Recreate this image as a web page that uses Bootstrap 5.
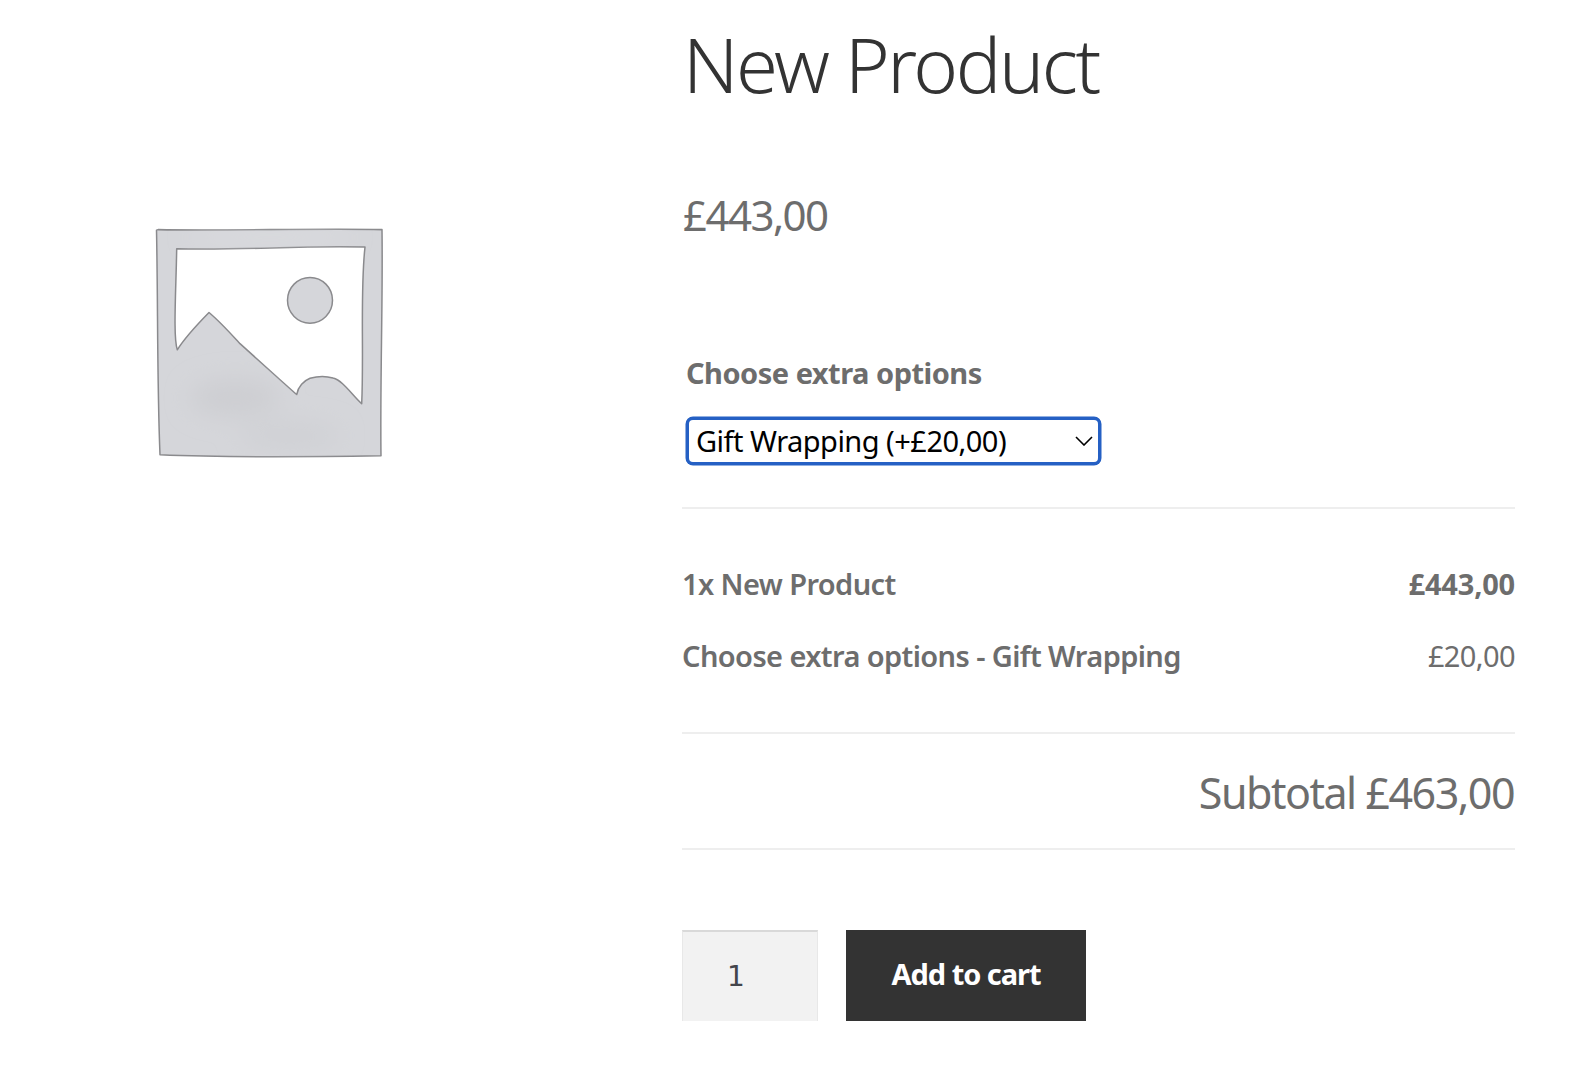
<!DOCTYPE html>
<html lang="en">
<head>
<meta charset="utf-8">
<title>New Product</title>
<link rel="stylesheet" href="https://cdn.jsdelivr.net/npm/bootstrap@5.3.0/dist/css/bootstrap.min.css">
<style>
html,body{background:#fff;height:1082px;overflow:hidden}
body{font-family:"Noto Sans","Liberation Sans",sans-serif;color:#6d6d6d}
.shop-page{width:1515px}
.gallery-col{width:682px;flex:none;padding:222px 0 0 150px}
.summary-col{flex:1 1 auto;min-width:0}
.prod-title{font-weight:300;font-size:76px;line-height:100px;letter-spacing:-2.4px;color:#333;margin:14px 0 0 1px}
.prod-price{font-size:42px;line-height:50px;letter-spacing:-1.55px;margin:76px 0 0 1px}
.opt-wrap{padding:0 0 0 4px;margin-top:113px}
.opt-label{font-weight:700;font-size:29px;line-height:40px;letter-spacing:-.5px;margin-bottom:24px}
.opt-select.form-select{width:415px;height:48px;padding:0 0 0 7px;border:3px solid #2560c4;border-radius:7px;font-size:29px;line-height:42px;letter-spacing:-.52px;color:#000;background-image:url("data:image/svg+xml,%3csvg xmlns='http://www.w3.org/2000/svg' viewBox='0 0 18 10'%3e%3cpath fill='none' stroke='%23000' stroke-width='1.6' d='M1 1l8 8 8-8'/%3e%3c/svg%3e");background-size:18px 10px;background-position:right 5px center;box-shadow:0 0 0 .5px #2560c4}
.rule{height:2px;background:#eee}
.rule-a{margin-top:42px}
.line-rows{padding-top:55px;padding-bottom:56px;font-size:29px;line-height:40px;letter-spacing:-.6px}
.line-rows .line-gap{margin-top:32px}
.strong-txt{font-weight:700;letter-spacing:-.2px}
.medium-txt{font-weight:600}
.sub-total{font-size:43px;line-height:56px;letter-spacing:-1.5px;text-align:right;padding:31px 1px 27px 0}
.cart-form{margin-top:80px;gap:28px}
.qty-box{width:136px;height:91px;background:#f2f2f2;border:0;border-top:2px solid #d9d9d9;border-left:1px solid #e8e8e8;border-right:1px solid #e8e8e8;border-radius:0;font-family:"DejaVu Sans",sans-serif;font-size:28px;color:#43454b;padding:0 0 0 44px;outline:0}
.cart-btn.btn{width:240px;height:91px;padding:0 0 3px;background:#333;color:#fff;border:0;border-radius:0;font-weight:700;font-size:29px;letter-spacing:-1.05px}
</style>
</head>
<body>
<main class="shop-page d-flex">
  <div class="gallery-col">
    <svg class="d-block" width="240" height="244" viewBox="150 222 240 240" preserveAspectRatio="none" role="img" aria-label="Placeholder image">
      <defs>
        <filter id="soft" x="-50%" y="-50%" width="200%" height="200%"><feGaussianBlur stdDeviation="12"/></filter>
        <filter id="edge"><feGaussianBlur stdDeviation=".45"/></filter>
        <clipPath id="shape"><path clip-rule="evenodd" d="M158 229.500C220 231 320 228 382 229.500C383 300 380 380 381 452C310 453 230 454 160 451C157 380 158 300 156.500 230ZM176.700 248.300C240 250 300 245 365 246.700C360 290 364 350 361.700 400.700C352 392 343 378 333 375.500C325 373 316 374 310 375.700C304 378 298 384 296.700 391.700C290 386 281 378 272 370L240 341.700C230 331 220 320 209 311C198 322 186 334 177.300 347.700C173 335 176 290 176.700 248.300Z"/></clipPath>
      </defs>
      <g filter="url(#edge)">
        <path fill="#d5d6da" stroke="#8a8a8d" stroke-width="1.5" fill-rule="evenodd" stroke-linejoin="round" d="M158 229.500C220 231 320 228 382 229.500C383 300 380 380 381 452C310 453 230 454 160 451C157 380 158 300 156.500 230ZM176.700 248.300C240 250 300 245 365 246.700C360 290 364 350 361.700 400.700C352 392 343 378 333 375.500C325 373 316 374 310 375.700C304 378 298 384 296.700 391.700C290 386 281 378 272 370L240 341.700C230 331 220 320 209 311C198 322 186 334 177.300 347.700C173 335 176 290 176.700 248.300Z"/>
        <circle cx="310" cy="299" r="22.500" fill="#d5d6da" stroke="#8a8a8d" stroke-width="1.500"/>
      </g>
      <g clip-path="url(#shape)">
        <g filter="url(#soft)">
          <ellipse cx="235" cy="395" rx="45" ry="18" fill="#cdced2"/>
          <ellipse cx="290" cy="432" rx="50" ry="12" fill="#cfd0d4"/>
          <ellipse cx="270" cy="237" rx="80" ry="6" fill="#dcdde0"/>
        </g>
      </g>
    </svg>
  </div>
  <section class="summary-col">
    <h1 class="prod-title">New Product</h1>
    <p class="prod-price">£443,00</p>
    <div class="opt-wrap">
      <div class="opt-label">Choose extra options</div>
      <select class="form-select opt-select" aria-label="Choose extra options">
        <option>Gift Wrapping (+£20,00)</option>
      </select>
    </div>
    <div class="rule rule-a"></div>
    <div class="line-rows">
      <div class="d-flex justify-content-between"><span class="medium-txt">1x New Product</span><span class="strong-txt">£443,00</span></div>
      <div class="d-flex justify-content-between line-gap"><span class="medium-txt">Choose extra options - Gift Wrapping</span><span>£20,00</span></div>
    </div>
    <div class="rule"></div>
    <div class="sub-total">Subtotal £463,00</div>
    <div class="rule"></div>
    <form class="cart-form d-flex">
      <input class="qty-box" type="text" value="1" aria-label="Quantity">
      <button class="btn cart-btn" type="button">Add to cart</button>
    </form>
  </section>
</main>
</body>
</html>
